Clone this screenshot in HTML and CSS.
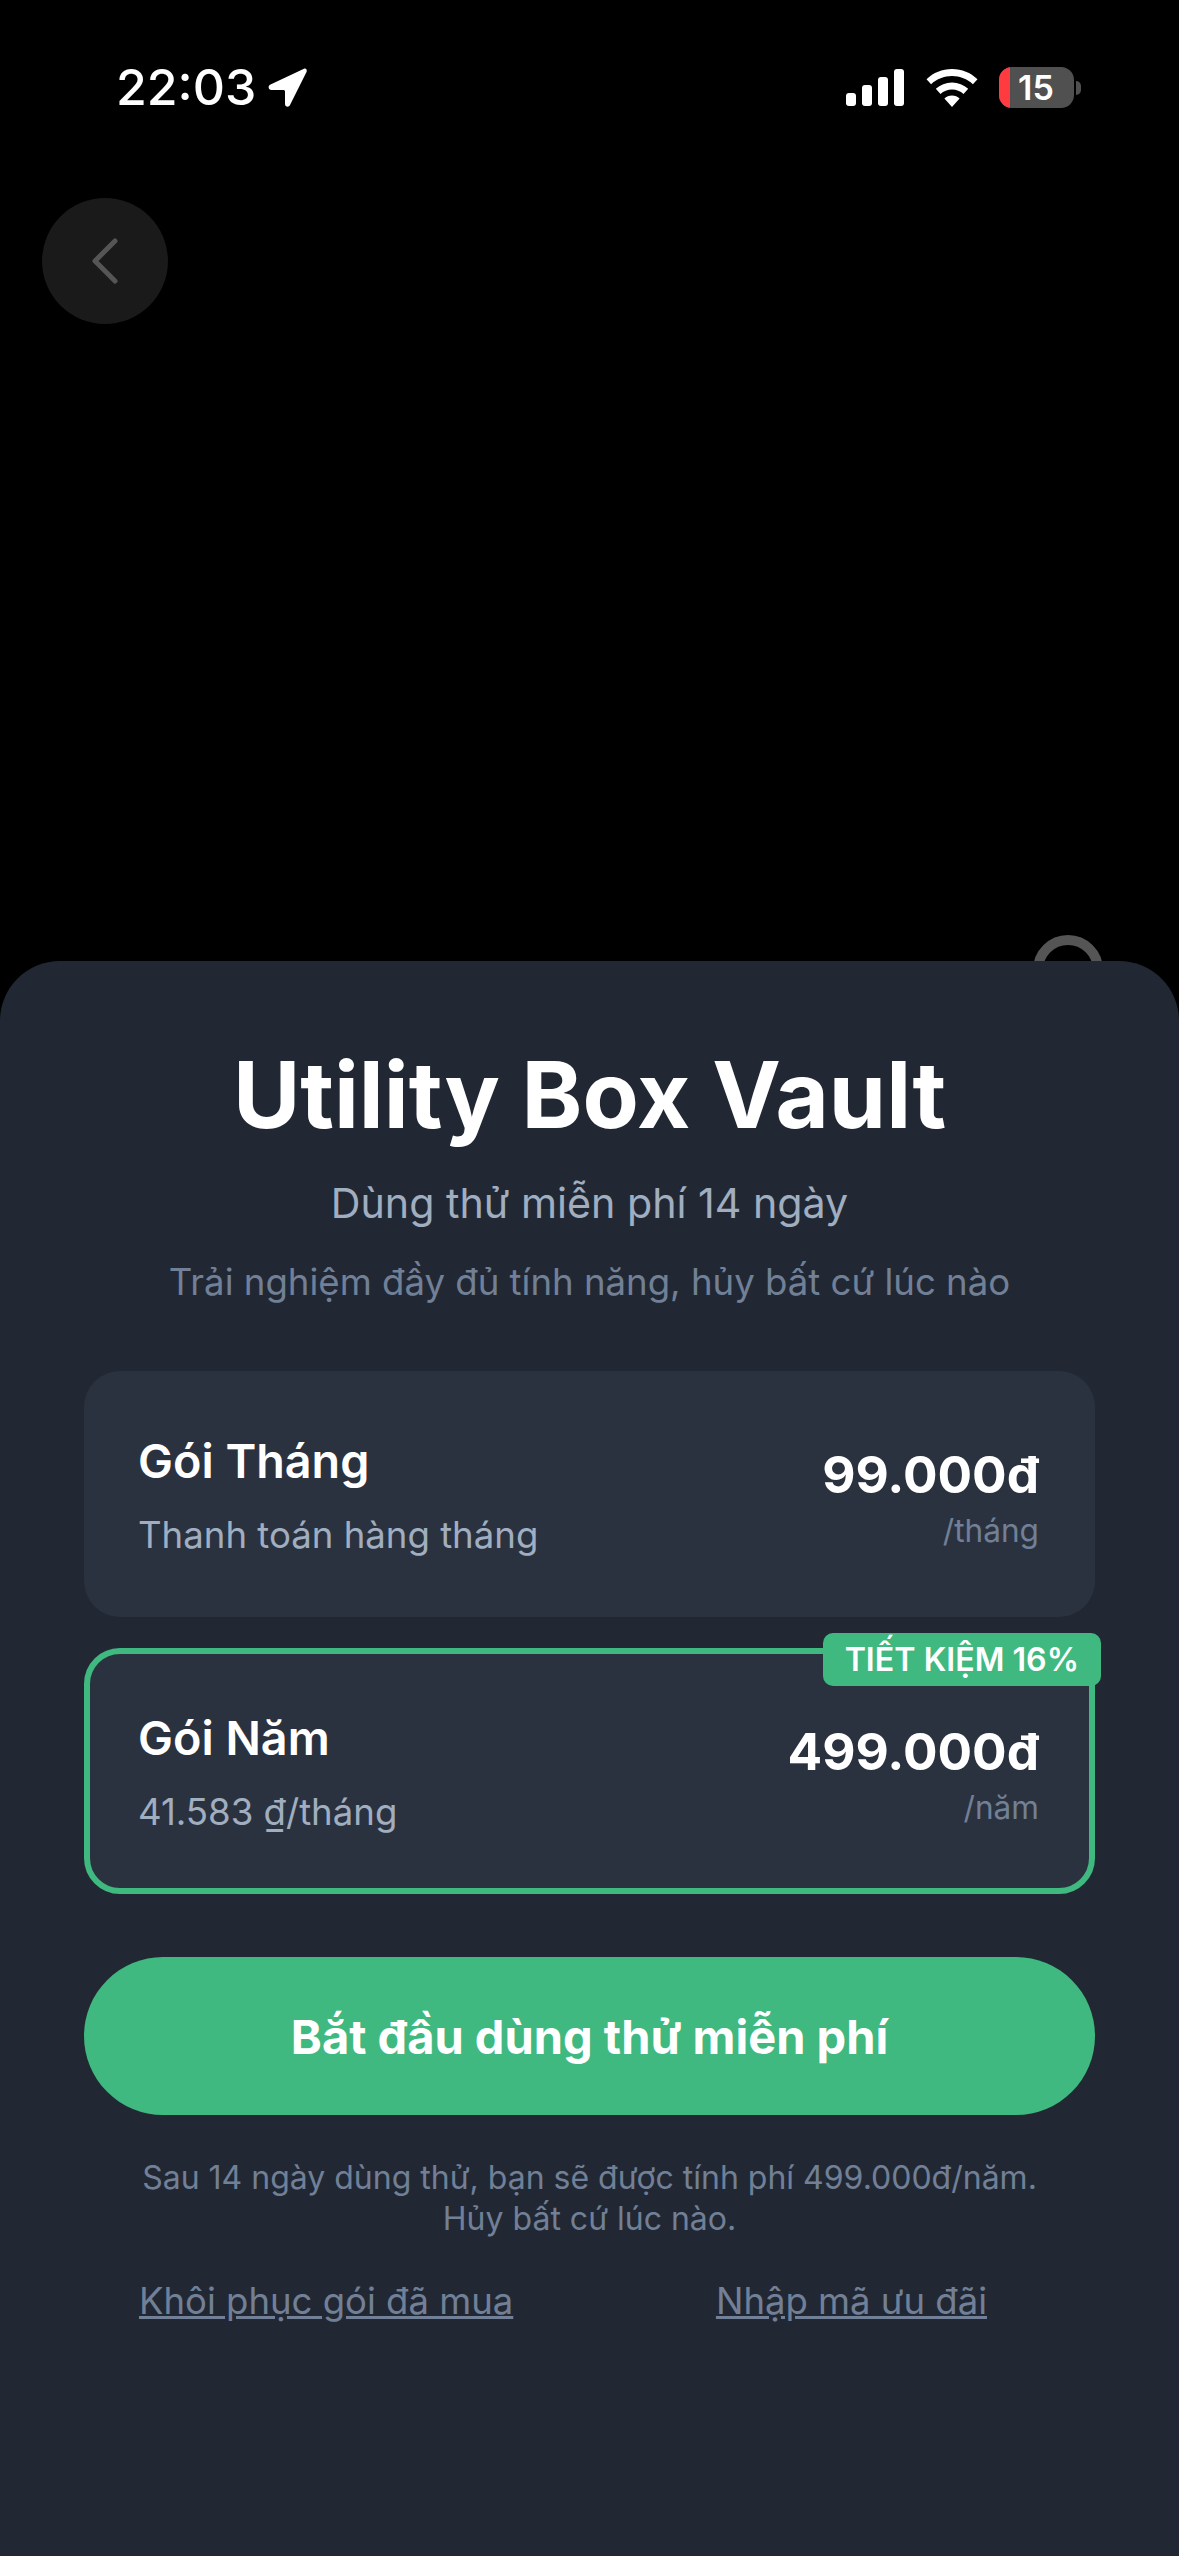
FILE: index.html
```html
<!DOCTYPE html>
<html lang="vi">
<head>
    <meta charset="UTF-8">
    <meta name="viewport" content="width=device-width, initial-scale=1.0">
    <title>Utility Box Vault</title>
    <link rel="stylesheet" href="styles.css">
</head>
<body>
    <div class="screen">
        <div class="status-bar">
            <div class="status-left">
                <span class="time">22:03</span>
                <svg class="location" viewBox="0 0 39 39"><path d="M36 .8 2.500 16.500c-3.200 1.500-2 5.500 1 5.500h12c.8 0 1.500.7 1.500 1.500V36c0 3 3.800 3.800 5 1L38.500 4c.9-2.200-.6-4-2.500-3.200z" fill="#fff"/></svg>
            </div>
            <div class="status-right">
                <svg class="signal" viewBox="0 0 58 37" fill="#fff">
                    <rect x="0" y="24" width="10" height="13" rx="3"/>
                    <rect x="16" y="16" width="10" height="21" rx="3"/>
                    <rect x="32" y="8" width="10" height="29" rx="3"/>
                    <rect x="48" y="0" width="10" height="37" rx="3"/>
                </svg>
                <svg class="wifi" viewBox="0 0 52 38" fill="#fff">
                    <path d="M26 0C16 0 7.500 3.700.5 10.200l4.600 5C10.800 10 18 7 26 7s15.200 3 20.900 8.200l4.600-5C44.500 3.700 36 0 26 0z"/>
                    <path d="M26 13.500c-6.200 0-11.800 2.300-16.200 6.300l4.700 5.100c3.100-2.800 7.100-4.500 11.500-4.500s8.400 1.700 11.500 4.500l4.700-5.100c-4.400-4-10-6.300-16.200-6.300z"/>
                    <path d="M26 26.500c-3 0-5.600 1.100-7.600 3L26 38l7.600-8.500c-2-1.900-4.600-3-7.600-3z"/>
                </svg>
                <div class="battery">
                    <div class="battery-body">
                        <span class="battery-low"></span>
                        <span class="battery-level">15</span>
                    </div>
                    <span class="battery-cap"></span>
                </div>
            </div>
        </div>

        <div class="top-area">
            <button class="back-button">
                <svg viewBox="0 0 26 46" width="26" height="46"><path d="M23 3 3 23l20 20" fill="none" stroke="#555" stroke-width="5" stroke-linecap="round" stroke-linejoin="round"/></svg>
            </button>
        </div>

        <div class="sheet-wrap">
            <div class="ring"></div>
            <div class="sheet">
                <h1 class="title">Utility Box Vault</h1>
                <p class="subtitle">Dùng thử miễn phí 14 ngày</p>
                <p class="description">Trải nghiệm đầy đủ tính năng, hủy bất cứ lúc nào</p>

                <div class="plans">
                    <div class="plan">
                        <div class="plan-info">
                            <div class="plan-name">Gói Tháng</div>
                            <div class="plan-note">Thanh toán hàng tháng</div>
                        </div>
                        <div class="plan-cost">
                            <div class="plan-price">99.000đ</div>
                            <div class="plan-period">/tháng</div>
                        </div>
                    </div>
                    <div class="plan selected">
                        <span class="badge">TIẾT KIỆM 16%</span>
                        <div class="plan-info">
                            <div class="plan-name">Gói Năm</div>
                            <div class="plan-note">41.583 ₫/tháng</div>
                        </div>
                        <div class="plan-cost">
                            <div class="plan-price">499.000đ</div>
                            <div class="plan-period">/năm</div>
                        </div>
                    </div>
                </div>

                <button class="start-button">Bắt đầu dùng thử miễn phí</button>

                <p class="fine-print">Sau 14 ngày dùng thử, bạn sẽ được tính phí 499.000đ/năm.<br>Hủy bất cứ lúc nào.</p>

                <div class="links">
                    <a class="link">Khôi phục gói đã mua</a>
                    <a class="link">Nhập mã ưu đãi</a>
                </div>
            </div>
        </div>
    </div>
</body>
</html>
```

FILE: styles.css
```css
:root {
    --sheet-bg: #212834;
    --card-bg: #2b323f;
    --green: #3fb97f;
    --text-light: #ffffff;
    --text-soft: #a0aec0;
    --text-muted: #718096;
}

* {
    margin: 0;
    padding: 0;
    box-sizing: border-box;
    font-family: Inter, 'Noto Sans', sans-serif;
}

body {
    background-color: #000;
    color: var(--text-light);
}

.screen {
    display: flex;
    flex-direction: column;
    width: 1179px;
    height: 2556px;
    overflow: hidden;
}

.status-bar {
    display: flex;
    justify-content: space-between;
    align-items: center;
    height: 108px;
    padding: 67px 98px 0 116px;
}

.status-left,
.status-right {
    display: flex;
    align-items: center;
}

.time {
    font-size: 50px;
    font-weight: 500;
    line-height: 41px;
}

.location {
    width: 39px;
    height: 39px;
    margin-left: 12px;
}

.signal {
    width: 58px;
    height: 37px;
}

.wifi {
    width: 52px;
    height: 38px;
    margin-left: 22px;
}

.battery {
    display: flex;
    align-items: center;
    margin-left: 21px;
}

.battery-body {
    display: flex;
    align-items: center;
    width: 75px;
    height: 41px;
    border-radius: 13px;
    overflow: hidden;
    background-color: #505050;
}

.battery-low {
    width: 11px;
    height: 100%;
    background-color: #ff3b3f;
}

.battery-level {
    margin-left: 8px;
    font-size: 34px;
    font-weight: 600;
    line-height: 41px;
}

.battery-cap {
    width: 5px;
    height: 14px;
    margin-left: 2px;
    border-radius: 0 7px 7px 0;
    background-color: #505050;
}

.top-area {
    padding: 90px 0 0 42px;
    height: 853px;
}

.back-button {
    display: flex;
    justify-content: center;
    align-items: center;
    width: 126px;
    height: 126px;
    border: none;
    border-radius: 50%;
    background-color: #1a1a1a;
}

.sheet-wrap {
    position: relative;
    flex: 1;
}

/* only the top of this shows above the sheet */
.ring {
    position: absolute;
    top: -26px;
    left: 1033px;
    width: 70px;
    height: 70px;
    border: 10px solid #555;
    border-radius: 50%;
}

.sheet {
    position: relative;
    height: 100%;
    padding: 84px 84px 0;
    border-radius: 60px 60px 0 0;
    background-color: var(--sheet-bg);
    text-align: center;
}

.title {
    font-size: 92px;
    font-weight: 700;
    line-height: 100px;
}

.subtitle {
    margin-top: 30px;
    font-size: 41.2px;
    line-height: 56px;
    color: var(--text-soft);
}

.description {
    margin-top: 26px;
    font-size: 36.6px;
    line-height: 50px;
    color: var(--text-muted);
}

.plans {
    display: flex;
    flex-direction: column;
    gap: 31px;
    margin-top: 64px;
}

.plan {
    position: relative;
    display: flex;
    justify-content: space-between;
    align-items: center;
    height: 246px;
    padding: 0 56px 0 54px;
    border-radius: 36px;
    background-color: var(--card-bg);
    text-align: left;
}

.plan.selected {
    padding: 0 50px 0 48px;
    border: 6px solid var(--green);
}

.badge {
    position: absolute;
    top: -21px;
    right: -12px;
    padding: 0 22px;
    border-radius: 10px;
    background-color: var(--green);
    font-size: 32.200px;
    font-weight: 600;
    line-height: 53px;
}

.plan-info {
    padding-top: 5px;
}

.plan-name {
    font-size: 46.7px;
    font-weight: 600;
    line-height: 56px;
}

.plan-note {
    margin-top: 21px;
    font-size: 36.6px;
    line-height: 50px;
    color: var(--text-soft);
}

.plan-cost {
    padding-top: 7px;
    text-align: right;
}

.plan-price {
    font-size: 51.3px;
    font-weight: 700;
    line-height: 64px;
}

.plan-period {
    margin-top: 3px;
    font-size: 31.6px;
    line-height: 44px;
    color: var(--text-muted);
}

.start-button {
    display: block;
    width: 100%;
    height: 158px;
    margin-top: 63px;
    border: none;
    border-radius: 79px;
    background-color: var(--green);
    color: var(--text-light);
    font-size: 47px;
    font-weight: 700;
}

.fine-print {
    margin-top: 42px;
    font-size: 32px;
    line-height: 41px;
    color: var(--text-muted);
}

.links {
    display: flex;
    justify-content: space-between;
    margin-top: 37px;
    padding: 0 108px 0 55px;
}

.link {
    font-size: 36.5px;
    line-height: 50px;
    color: var(--text-muted);
    text-decoration: underline;
}
```
